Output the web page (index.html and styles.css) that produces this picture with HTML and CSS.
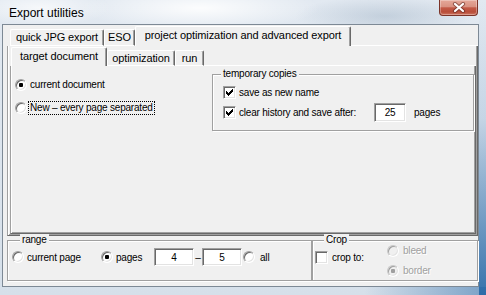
FILE: index.html
```html
<!DOCTYPE html>
<html lang="en">
<head>
  <meta charset="UTF-8" />
  <title>Export utilities</title>
  <link rel="stylesheet" href="styles.css">
</head>
<body>

<div class="window">
  <div class="titlebar">
    <span class="title">Export utilities</span>
    <div class="close-btn">
      <svg width="14" height="11" viewBox="0 0 14 11">
        <path d="M3 2 L11 9 M11 2 L3 9" stroke="#5a231b" stroke-opacity="0.55" stroke-width="4.2" stroke-linecap="round"/>
        <path d="M3 2 L11 9 M11 2 L3 9" stroke="#fff" stroke-width="2.2" stroke-linecap="round"/>
      </svg>
    </div>
  </div>

  <div class="client">
    <div class="mp mp-outer">
      <div class="tabstrip">
        <div class="tab tab-jpg">quick JPG export</div>
        <div class="tab tab-eso">ESO</div>
        <div class="tab tab-active tab-project">project optimization and advanced export</div>
        <div class="tab-fill"></div>
      </div>

      <div class="page page-outer">
        <div class="mp mp-inner">
          <div class="tabstrip tabstrip-inner">
            <div class="tab tab-active tab-target">target document</div>
            <div class="tab tab-opt">optimization</div>
            <div class="tab tab-run">run</div>
            <div class="tab-fill"></div>
          </div>

          <div class="page page-inner">
            <div class="doc-options">
              <div class="row">
                <span class="radio checked"></span>
                <span>current document</span>
              </div>
              <div class="row row-new">
                <span class="radio"></span>
                <span class="focus">New – every page separated</span>
              </div>
            </div>

            <div class="frame frame-temp">
              <span class="frame-label label-temp">temporary copies</span>
              <div class="row">
                <span class="check">
                  <svg width="7" height="7" viewBox="0 0 7 7"><path d="M0 2h1v3H0z M1 3h1v3H1z M2 4h1v3H2z M3 3h1v3H3z M4 2h1v3H4z M5 1h1v3H5z M6 0h1v3H6z" fill="#000"/></svg>
                </span>
                <span>save as new name</span>
              </div>
              <div class="row row-clear">
                <span class="check">
                  <svg width="7" height="7" viewBox="0 0 7 7"><path d="M0 2h1v3H0z M1 3h1v3H1z M2 4h1v3H2z M3 3h1v3H3z M4 2h1v3H4z M5 1h1v3H5z M6 0h1v3H6z" fill="#000"/></svg>
                </span>
                <span class="clear-text">clear history and save after:</span>
                <span class="field field-pages">25</span>
                <span class="pages-text">pages</span>
              </div>
            </div>
          </div>
        </div>
      </div>
    </div>

    <div class="bottom-row">
      <div class="frame frame-range">
        <span class="frame-label label-range">range</span>
        <div class="row range-row">
          <div class="row rng-current">
            <span class="radio"></span>
            <span>current page</span>
          </div>
          <div class="row rng-pages">
            <span class="radio checked"></span>
            <span>pages</span>
          </div>
          <span class="field field-range">4</span>
          <span class="dash">–</span>
          <span class="field field-range">5</span>
          <span class="radio radio-all"></span>
          <span>all</span>
        </div>
      </div>

      <div class="frame frame-crop">
        <span class="frame-label label-crop">Crop</span>
        <div class="row crop-check">
          <span class="check"></span>
          <span>crop to:</span>
        </div>
        <div class="crop-options">
          <div class="row disabled">
            <span class="radio"></span>
            <span>bleed</span>
          </div>
          <div class="row disabled">
            <span class="radio checked"></span>
            <span>border</span>
          </div>
        </div>
      </div>
    </div>
  </div>
</div>

</body>
</html>
```

FILE: styles.css
```css
* {
  box-sizing: border-box;
}

body {
  margin: 0;
  background: #fff;
  font-family: "Liberation Sans", Arial, sans-serif;
  font-size: 10px;
  letter-spacing: -0.2px;
  color: #000;
}

.window {
  width: 486px;
  height: 295px;
  display: flex;
  flex-direction: column;
  overflow: hidden;
  background:
    linear-gradient(180deg, rgba(60,120,180,0) 0%, rgba(60,120,180,0.15) 40%, rgba(38,103,165,0.9) 100%) right top / 7px 100% no-repeat,
    linear-gradient(90deg, rgba(80,120,160,0) 0%, rgba(80,120,160,0) 75%, rgba(48,110,170,0.55) 100%) left bottom / 100% 8px no-repeat,
    radial-gradient(ellipse 120px 22px at 200px 8px, rgba(255,255,255,0.9), rgba(255,255,255,0)),
    radial-gradient(ellipse 90px 20px at 385px 16px, rgba(150,170,190,0.4), rgba(150,170,190,0)),
    radial-gradient(ellipse 70px 18px at 40px 8px, rgba(255,255,255,0.7), rgba(255,255,255,0)),
    linear-gradient(180deg, #e2e9f1, #d6e0ea);
}

/* title bar */

.titlebar {
  height: 24px;
  display: flex;
  align-items: flex-start;
  padding-left: 9px;
}

.title {
  font-size: 12px;
  letter-spacing: 0;
  line-height: 16px;
  padding-top: 5px;
  color: #000;
}

.close-btn {
  margin-left: auto;
  margin-right: 8px;
  width: 39px;
  height: 16px;
  display: flex;
  align-items: center;
  justify-content: center;
  border: 1px solid #7b3328;
  border-top: none;
  border-radius: 0 0 4px 4px;
  background: linear-gradient(180deg, #e5a899 0%, #d99282 45%, #c35a47 52%, #b84d39 80%, #cf7762 100%);
  box-shadow: inset 0 0 0 1px rgba(255,255,255,0.3);
}

/* client area */

.client {
  margin-left: 2px;
  width: 477px;
  height: 263px;
  background: #f0f0f0;
  border: 1px solid #7d8995;
  padding: 1px 0 0 4px;
  display: flex;
  flex-direction: column;
}

.mp-outer {
  width: 471px;
  height: 210px;
  display: flex;
  flex-direction: column;
}

.tabstrip {
  height: 20px;
  display: flex;
  align-items: flex-end;
  padding-left: 3px;
}

.tabstrip-inner {
  padding-left: 1px;
}

.tab {
  height: 17px;
  font-size: 11px;
  letter-spacing: -0.1px;
  line-height: 15px;
  text-align: center;
  white-space: nowrap;
  border: 1px solid #fff;
  border-right-color: #696969;
  border-radius: 2px 2px 0 0;
  box-shadow: inset -1px 0 0 #a0a0a0;
}

.tab-active {
  height: 20px;
  padding-top: 1px;
  border-bottom: none;
}

.tabstrip-inner .tab {
  height: 16px;
  line-height: 14px;
}

.tabstrip-inner .tab-active {
  height: 19px;
  line-height: 15px;
}

.tab-jpg { width: 94px; }
.tab-eso { width: 31px; }
.tab-project { width: 216px; }
.tab-target { width: 96px; }
.tab-opt { width: 68px; }
.tab-run { width: 29px; }

.tab-fill {
  flex: 1;
  border-bottom: 1px solid #fff;
}

.page {
  border-left: 1px solid #a0a0a0;
  border-right: 1px solid #696969;
  border-bottom: 1px solid #696969;
  box-shadow: inset 1px 0 0 #fff, inset -1px -1px 0 #a0a0a0;
}

.page-outer {
  height: 190px;
  padding-bottom: 1px;
}

.mp-inner {
  margin: 0 1px 0 2px;
  display: flex;
  flex-direction: column;
}

.page-inner {
  height: 168px;
  display: flex;
  align-items: flex-start;
  padding: 8px 0 0 4px;
}

/* controls */

.row {
  display: flex;
  align-items: center;
  height: 13px;
  white-space: nowrap;
}

.radio {
  position: relative;
  flex: none;
  width: 12px;
  height: 12px;
  margin-right: 3px;
  border-radius: 50%;
  border: 1px solid;
  border-color: #a0a0a0 #fff #fff #a0a0a0;
  background: #fff;
  box-shadow: inset 1px 1px 0 #696969, inset -1px -1px 0 #e3e3e3;
}

.radio.checked::after {
  content: "";
  position: absolute;
  left: 3px;
  top: 3px;
  width: 4px;
  height: 4px;
  border-radius: 1px;
  background: #000;
}

.check {
  flex: none;
  width: 13px;
  height: 13px;
  margin-right: 3px;
  display: flex;
  align-items: center;
  justify-content: center;
  border: 1px solid;
  border-color: #a0a0a0 #fff #fff #a0a0a0;
  background: #fff;
  box-shadow: inset 1px 1px 0 #696969, inset -1px -1px 0 #e3e3e3;
}

.field {
  flex: none;
  height: 18px;
  display: flex;
  align-items: center;
  justify-content: center;
  border: 1px solid;
  border-color: #a0a0a0 #fff #fff #a0a0a0;
  background: #fff;
  box-shadow: inset 1px 1px 0 #696969, inset -1px -1px 0 #e3e3e3;
}

.disabled {
  color: #a0a0a0;
  text-shadow: 1px 1px 0 #fff;
}

.disabled .radio {
  background: #f0f0f0;
  border-color: #c8c8c8 #fff #fff #c8c8c8;
  box-shadow: inset 1px 1px 0 #a0a0a0, inset -1px -1px 0 #e3e3e3;
}

.disabled .radio.checked::after {
  background: #a0a0a0;
}

/* target document page */

.doc-options {
  width: 197px;
  padding-top: 4px;
}

.row-new {
  height: 14px;
  margin-top: 10px;
}

.focus {
  margin-left: -2px;
  padding: 0 1px 1px;
  height: 14px;
  display: flex;
  align-items: center;
  border: 1px dotted #000;
}

.frame {
  position: relative;
  border: 1px solid #a0a0a0;
  box-shadow: inset 1px 1px 0 #fff, 1px 1px 0 #fff;
}

.frame-label {
  position: absolute;
  top: -7px;
  padding: 0 2px;
  line-height: 12px;
  background: #f0f0f0;
  white-space: nowrap;
}

.frame-temp {
  width: 262px;
  height: 57px;
  padding: 11px 0 0 10px;
}

.label-temp { left: 8px; }

.row-clear {
  height: 19px;
  margin-top: 4px;
}

.clear-text {
  width: 135px;
}

.field-pages {
  width: 32px;
  height: 19px;
}

.pages-text {
  margin-left: 8px;
}

/* range / crop */

.bottom-row {
  margin-top: 4px;
  display: flex;
}

.frame-range {
  width: 305px;
  height: 41px;
  padding: 7px 0 0 4px;
}

.label-range { left: 12px; }

.range-row {
  height: 18px;
}

.rng-current { width: 89px; }
.rng-pages { width: 53px; }

.field-range {
  width: 40px;
}

.dash {
  width: 8px;
  text-align: center;
}

.radio-all {
  margin-left: 1px;
  margin-right: 5px;
}

.frame-crop {
  width: 166px;
  height: 41px;
  padding: 3px 0 0 2px;
  display: flex;
  align-items: flex-start;
}

.label-crop { left: 11px; }

.crop-check {
  width: 72px;
  margin-top: 7px;
}

.crop-check .check {
  margin-right: 4px;
}

.crop-options .row + .row {
  margin-top: 7px;
}

.crop-options .radio {
  margin-right: 4px;
}
```
